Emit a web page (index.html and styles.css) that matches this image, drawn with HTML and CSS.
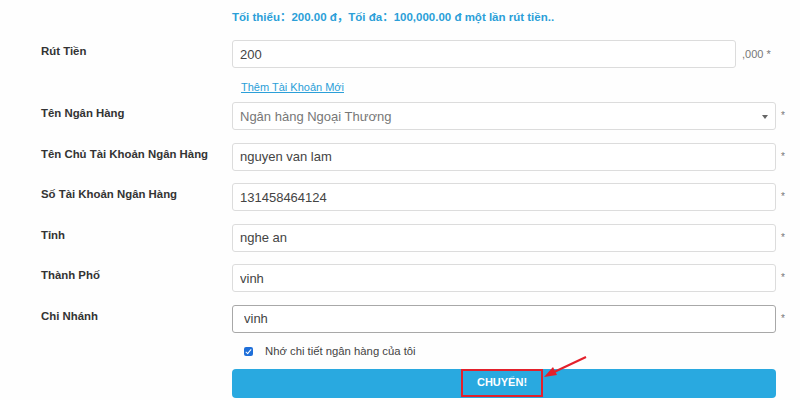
FILE: index.html
```html
<!DOCTYPE html>
<html>
	<head>
		<meta charset="utf-8">
		<title>Rút Tiền</title>
		<link rel="stylesheet" href="styles.css">
	</head>
	<body>
		<div class="withdraw">
			<div class="row note-row">
				<span class="label"></span>
				<p class="note">Tối thiểu：200.00 đ，Tối đa：100,000.00 đ một lần rút tiền..</p>
			</div>
			<div class="row">
				<label class="label">Rút Tiền</label>
				<input class="field short" type="text" value="200">
				<span class="suffix">,000 *</span>
			</div>
			<div class="row link-row">
				<span class="label"></span>
				<a class="add-link" href="#">Thêm Tài Khoản Mới</a>
			</div>
			<div class="row">
				<label class="label">Tên Ngân Hàng</label>
				<div class="select-wrap">
					<select class="field select">
						<option>Ngân hàng Ngoại Thương</option>
					</select>
				</div>
				<span class="req">*</span>
			</div>
			<div class="row">
				<label class="label">Tên Chủ Tài Khoản Ngân Hàng</label>
				<input class="field" type="text" value="nguyen van lam">
				<span class="req">*</span>
			</div>
			<div class="row">
				<label class="label">Số Tài Khoản Ngân Hàng</label>
				<input class="field" type="text" value="131458464124">
				<span class="req">*</span>
			</div>
			<div class="row">
				<label class="label">Tỉnh</label>
				<input class="field" type="text" value="nghe an">
				<span class="req">*</span>
			</div>
			<div class="row">
				<label class="label">Thành Phố</label>
				<input class="field" type="text" value="vinh">
				<span class="req">*</span>
			</div>
			<div class="row">
				<label class="label">Chi Nhánh</label>
				<input class="field active" type="text" value="vinh">
				<span class="req">*</span>
			</div>
			<div class="row check-row">
				<span class="label"></span>
				<label class="remember"><span class="box"></span>Nhớ chi tiết ngân hàng của tôi</label>
			</div>
			<div class="row submit-row">
				<span class="label"></span>
				<button class="submit"><span class="mark">CHUYỂN!</span></button>
			</div>
			<svg class="arrow" width="60" height="30" viewBox="0 0 60 30">
				<line x1="54" y1="3" x2="20" y2="19" stroke="#e3202b" stroke-width="2"/>
				<polygon points="12,23 21,13 25,21" fill="#e3202b"/>
			</svg>
		</div>
	</body>
</html>
```

FILE: styles.css
```css
* {
	margin: 0;
	padding: 0;
	box-sizing: border-box;
}
body {
	background: #fefefe;
	font-family: "Liberation Sans", Arial, "Noto Sans CJK SC", sans-serif;
	color: #333;
}
.withdraw {
	position: relative;
	padding: 10px 0 0 41px;
}
.row {
	display: flex;
	align-items: flex-start;
	margin-bottom: 12.5px;
}
.label {
	width: 191px;
	flex: none;
	padding-top: 4px;
	font-size: 11.4px;
	font-weight: bold;
	line-height: 14px;
	color: #333;
}
.note-row {
	margin-bottom: 16px;
}
.note-row .label, .link-row .label, .check-row .label, .submit-row .label {
	padding-top: 0;
}
.note {
	font-size: 11.5px;
	font-weight: bold;
	line-height: 14px;
	color: #2b9fd8;
}
.field {
	width: 544px;
	height: 28px;
	border: 1px solid #dcdcdc;
	border-radius: 3px;
	background: #fff;
	padding: 0 7px;
	font-family: "Liberation Sans", Arial, sans-serif;
	font-size: 13px;
	color: #444;
	outline: none;
}
.field.short {
	width: 504px;
}
.field.active {
	border-color: #a8a8a8;
	padding-left: 11px;
}
.suffix, .req {
	font-size: 11px;
	color: #777;
	line-height: 28px;
	margin-left: 6px;
}
.req {
	font-size: 10px;
	margin-left: 5px;
}
.link-row {
	margin-top: -0.5px;
	margin-bottom: 8px;
}
.add-link {
	font-size: 11px;
	line-height: 14px;
	color: #2b9fd8;
	margin-left: 9px;
}
.select-wrap {
	position: relative;
}
.select {
	appearance: none;
	-webkit-appearance: none;
	color: #777;
}
.select-wrap::after {
	content: "";
	position: absolute;
	right: 8px;
	top: 13px;
	border-left: 3.5px solid transparent;
	border-right: 3.5px solid transparent;
	border-top: 4px solid #666;
}
.check-row {
	margin-top: -1px;
	margin-bottom: 11px;
}
.remember {
	display: flex;
	align-items: center;
	font-size: 11.3px;
	line-height: 14px;
	color: #444;
}
.remember .box {
	width: 9px;
	height: 9px;
	margin: 0 12px 0 12px;
	border-radius: 2px;
	background: #1f6fd9;
	position: relative;
}
.remember .box::after {
	content: "";
	position: absolute;
	left: 3px;
	top: 1px;
	width: 2px;
	height: 5px;
	border: solid #fff;
	border-width: 0 1.5px 1.5px 0;
	transform: rotate(40deg);
}
.submit {
	width: 544px;
	height: 29px;
	border: none;
	border-radius: 4px;
	background: #29a9e0;
	display: flex;
	justify-content: center;
	cursor: pointer;
}
.submit .mark {
	display: block;
	width: 82px;
	height: 28px;
	margin-left: -4px;
	border: 2px solid #e3202b;
	font-family: "Liberation Sans", Arial, sans-serif;
	font-size: 11px;
	font-weight: bold;
	line-height: 23px;
	color: #fff;
	text-align: center;
}
.arrow {
	position: absolute;
	left: 532px;
	top: 354px;
}
```
